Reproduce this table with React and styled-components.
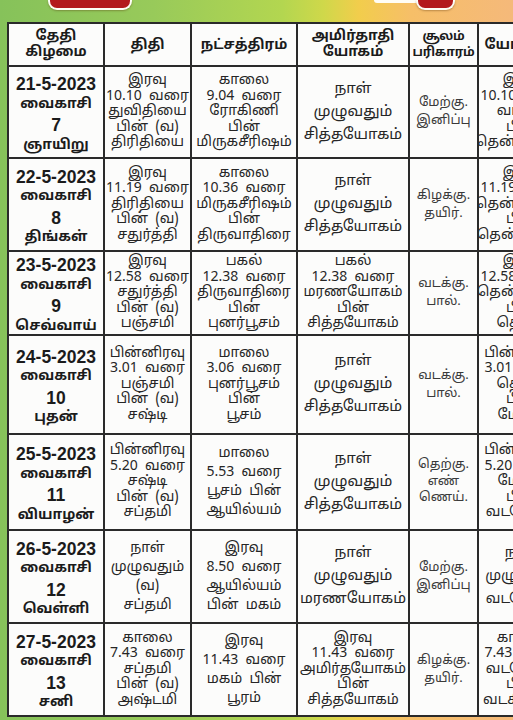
import React from "react";
import styled, { createGlobalStyle } from "styled-components";

const Global = createGlobalStyle`
  html, body { margin: 0; padding: 0; }
  body {
    width: 513px;
    height: 720px;
    overflow: hidden;
    font-family: "Noto Sans Tamil", "Lohit Tamil", "Noto Sans", "Liberation Sans", sans-serif;
    color: #1d1d1d;
  }
`;

const Page = styled.div`
  width: 513px;
  height: 720px;
  overflow: hidden;
  display: flex;
  flex-direction: column;
  background: linear-gradient(
    90deg,
    #86c25a 0%,
    #98ca5a 30%,
    #b3d650 55%,
    #cfd84a 63%,
    #f2cd4c 70%,
    #f6bf68 80%,
    #f5b97a 100%
  );
`;

const TopBar = styled.div`
  height: 22px;
  flex: none;
  position: relative;
  display: flex;
  align-items: flex-start;
`;

const RedTab = styled.div`
  margin-left: ${(p) => p.$left}px;
  width: ${(p) => p.$w}px;
  height: 8px;
  background: #b3191d;
  border: 2px solid #fdfdf6;
  border-top: none;
  border-radius: 0 0 9px 9px;
  box-shadow: 0 1px 2px rgba(80, 40, 0, 0.35);
`;

const WhitePill = styled.div`
  margin-left: ${(p) => p.$left}px;
  width: ${(p) => p.$w}px;
  height: 3px;
  background: #fffdf5;
  border-radius: 0 0 4px 4px;
  margin-right: -6px;
`;

const Grid = styled.div`
  margin-left: 7px;
  width: 560px;
  flex: none;
  display: grid;
  grid-template-columns: 94px 85px 104px 110px 67px 86px;
  grid-template-rows: 41px 90px 91px 82px 97px 94px 91px 91px;
  gap: 2px;
  padding: 2px;
  background: #2a2a2a;
`;

const Cell = styled.div`
  background: #fcfcfb;
  display: flex;
  flex-direction: column;
  align-items: center;
  justify-content: center;
  padding-top: ${(p) => p.$pt || 0}px;
  box-sizing: border-box;
  text-align: center;
  overflow: hidden;
`;

const Line = styled.div`
  white-space: pre;
  font-family: ${(p) =>
    p.$latin
      ? '"Liberation Sans", "Noto Sans Tamil", "Lohit Tamil", sans-serif'
      : "inherit"};
  font-size: ${(p) => p.$size}px;
  line-height: ${(p) => p.$lh}px;
  font-weight: ${(p) => (p.$bold ? 700 : 400)};
  letter-spacing: ${(p) => p.$ls || 0}px;
  color: ${(p) => p.$color || "#262626"};
`;

const headers = [
  ["தேதி", "கிழமை"],
  ["திதி"],
  ["நட்சத்திரம்"],
  ["அமிர்தாதி", "யோகம்"],
  ["சூலம்", "பரிகாரம்"],
  ["யோகினி"],
];

const rows = [
  [
    ["21-5-2023", "வைகாசி", "7", "ஞாயிறு"],
    ["இரவு", "10.10  வரை", "துவிதியை", "பின்  (வ)", "திரிதியை"],
    ["காலை", "9.04  வரை", "ரோகிணி", "பின்", "மிருகசீரிஷம்"],
    ["நாள்", "முழுவதும்", "சித்தயோகம்"],
    ["மேற்கு.", "இனிப்பு"],
    ["இரவு", "10.10  வரை", "வடக்கு", "பின்", "தென்கிழக்கு"],
  ],
  [
    ["22-5-2023", "வைகாசி", "8", "திங்கள்"],
    ["இரவு", "11.19  வரை", "திரிதியை", "பின்  (வ)", "சதுர்த்தி"],
    ["காலை", "10.36  வரை", "மிருகசீரிஷம்", "பின்", "திருவாதிரை"],
    ["நாள்", "முழுவதும்", "சித்தயோகம்"],
    ["கிழக்கு.", "தயிர்."],
    ["இரவு", "11.19  வரை", "தென்கிழக்கு", "பின்", "தென்மேற்கு"],
  ],
  [
    ["23-5-2023", "வைகாசி", "9", "செவ்வாய்"],
    ["இரவு", "12.58  வரை", "சதுர்த்தி", "பின்  (வ)", "பஞ்சமி"],
    ["பகல்", "12.38  வரை", "திருவாதிரை", "பின்", "புனர்பூசம்"],
    ["பகல்", "12.38  வரை", "மரணயோகம்", "பின்", "சித்தயோகம்"],
    ["வடக்கு.", "பால்."],
    ["இரவு", "12.58  வரை", "தென்மேற்கு", "பின்", "தெற்கு"],
  ],
  [
    ["24-5-2023", "வைகாசி", "10", "புதன்"],
    ["பின்னிரவு", "3.01  வரை", "பஞ்சமி", "பின்  (வ)", "சஷ்டி"],
    ["மாலை", "3.06  வரை", "புனர்பூசம்", "பின்", "பூசம்"],
    ["நாள்", "முழுவதும்", "சித்தயோகம்"],
    ["வடக்கு.", "பால்."],
    ["பின்னிரவு", "3.01  வரை", "தெற்கு", "பின்", "மேற்கு"],
  ],
  [
    ["25-5-2023", "வைகாசி", "11", "வியாழன்"],
    ["பின்னிரவு", "5.20  வரை", "சஷ்டி", "பின்  (வ)", "சப்தமி"],
    ["மாலை", "5.53  வரை", "பூசம்  பின்", "ஆயில்யம்"],
    ["நாள்", "முழுவதும்", "சித்தயோகம்"],
    ["தெற்கு.", "எண்", "ணெய்."],
    ["பின்னிரவு", "5.20  வரை", "மேற்கு", "பின்", "வடமேற்கு"],
  ],
  [
    ["26-5-2023", "வைகாசி", "12", "வெள்ளி"],
    ["நாள்", "முழுவதும்", "(வ)", "சப்தமி"],
    ["இரவு", "8.50  வரை", "ஆயில்யம்", "பின்  மகம்"],
    ["நாள்", "முழுவதும்", "மரணயோகம்"],
    ["மேற்கு.", "இனிப்பு"],
    ["நாள்", "முழுவதும்", "வடமேற்கு"],
  ],
  [
    ["27-5-2023", "வைகாசி", "13", "சனி"],
    ["காலை", "7.43  வரை", "சப்தமி", "பின்  (வ)", "அஷ்டமி"],
    ["இரவு", "11.43  வரை", "மகம்  பின்", "பூரம்"],
    ["இரவு", "11.43  வரை", "அமிர்தயோகம்", "பின்", "சித்தயோகம்"],
    ["கிழக்கு.", "தயிர்."],
    ["காலை", "7.43  வரை", "வடமேற்கு", "பின்", "வடகிழக்கு"],
  ],
];

function lineStyle(col, idx, count) {
  if (col === 0) {
    const big = idx === 0 || idx === 2;
    return {
      size: big ? 17.5 : 14,
      bold: true,
      lh: 20.5,
      color: "#1b1b1b",
      latin: big,
    };
  }
  if (col === 4) {
    return { size: 13, lh: count === 3 ? 16.5 : 18, color: "#3a3a3a" };
  }
  const lh = count >= 5 ? 15.5 : count === 4 ? 19 : 23;
  const size = col === 3 && count === 3 ? 15 : 14;
  return { size, lh };
}

export default function App() {
  return (
    <Page>
      <Global />
      <TopBar>
        <RedTab $left={48} $w={80} />
        <WhitePill $left={242} $w={48} />
        <RedTab $left={0} $w={35} />
      </TopBar>
      <Grid>
        {headers.map((h, i) => (
          <Cell key={"h" + i} $pt={h.length === 1 ? 3 : 0}>
            {h.map((t, j) => (
              <Line
                key={j}
                $size={i === 4 ? 12.5 : 14}
                $ls={i === 4 ? -0.3 : 0}
                $lh={16}
                $bold
                $color="#1b1b1b"
              >
                {t}
              </Line>
            ))}
          </Cell>
        ))}
        {rows.map((row, r) =>
          row.map((lines, c) => (
            <Cell key={r + "-" + c} $pt={c === 0 ? 6 : 0}>
              {lines.map((t, j) => {
                const s = lineStyle(c, j, lines.length);
                return (
                  <Line
                    key={j}
                    $size={s.size}
                    $lh={s.lh}
                    $bold={s.bold}
                    $color={s.color}
                    $latin={s.latin}
                  >
                    {t}
                  </Line>
                );
              })}
            </Cell>
          ))
        )}
      </Grid>
    </Page>
  );
}
